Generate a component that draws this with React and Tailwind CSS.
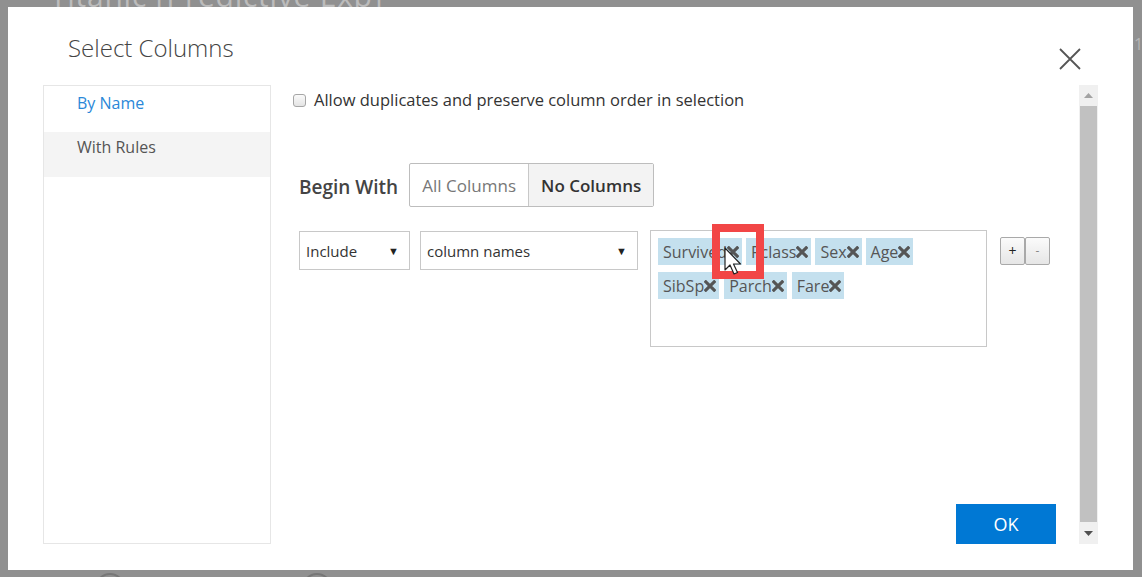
import React from 'react';

const font = { fontFamily: '"Open Sans", "Noto Sans", sans-serif' };

const tagsRow1 = ['Survived', 'Pclass', 'Sex', 'Age'];
const tagsRow2 = ['SibSp', 'Parch', 'Fare'];

const Tag = ({ label }) => (
  <span className="inline-flex items-center h-[27px] pl-[5px] pr-[3px] bg-[#c4e0ee] text-[16px] text-[#555] leading-none">
    {label}
    <svg width="12" height="12" viewBox="0 0 10 10">
      <path d="M1.5 1.5 L8.5 8.5 M8.5 1.5 L1.5 8.5" stroke="#555" strokeWidth="2.6" strokeLinecap="square" />
    </svg>
  </span>
);

const Select = ({ value, width }) => (
  <div className={`flex items-center justify-between h-[39px] ${width} border border-[#c8c8c8] bg-white pl-[6px] pr-[10px] pt-[2px] text-[15px] text-[#333]`}>
    <span>{value}</span>
    <span className="text-[11px] text-[#222]">▼</span>
  </div>
);

const App = () => {
  return (
    <div className="relative w-[1142px] h-[577px] overflow-hidden bg-[#909090]" style={font}>
      {/* page behind the overlay */}
      <div className="absolute left-[50px] -top-[27px] text-[30px] text-[#bcbcbc] tracking-wide">Titanic [Predictive Exp]</div>
      <div className="absolute left-[1134px] top-[32px] text-[16px] text-[#b5b5b5]">1</div>
      <div className="absolute left-[95px] top-[573px] w-[30px] h-[30px] rounded-full border-2 border-[#777]" />
      <div className="absolute left-[302px] top-[573px] w-[30px] h-[30px] rounded-full border-2 border-[#777]" />

      {/* dialog */}
      <div className="absolute left-[8px] top-[7px] w-[1125px] h-[563px] bg-white flex flex-col">
        <div className="flex items-start justify-between h-[78px]">
          <h1 className="ml-[60px] mt-[23px] text-[24px] font-light text-[#444]">Select Columns</h1>
          <button className="mr-[52px] mt-[41px] w-[22px] h-[22px]">
            <svg viewBox="0 0 22 22" width="22" height="22">
              <path d="M1 1 L21 21 M21 1 L1 21" stroke="#555" strokeWidth="1.8" />
            </svg>
          </button>
        </div>

        <div className="flex h-[459px]">
          {/* left nav */}
          <div className="ml-[35px] w-[228px] border border-[#e6e6e6]">
            <div className="h-[46px] pl-[33px] pt-[5px] text-[16px] text-[#2b88d8]">By Name</div>
            <div className="h-[45px] pl-[33px] pt-[3px] bg-[#f4f4f4] text-[16px] text-[#555]">With Rules</div>
          </div>

          {/* content */}
          <div className="relative flex-1 flex flex-col pl-[28px] pr-[23px]">
            <label className="flex items-center -ml-[6px] mt-[6px] h-[18px] gap-[8px] text-[16.5px] text-[#333]">
              <span className="w-[13px] h-[13px] rounded-[3px] border border-[#a6a6a6] bg-gradient-to-b from-[#fafafa] to-[#e4e4e4]" />
              Allow duplicates and preserve column order in selection
            </label>

            <div className="flex items-center mt-[54px] h-[44px]">
              <span className="text-[19px] font-semibold text-[#444] mr-[11px] pt-[4px]">Begin With</span>
              <div className="flex h-[44px] border border-[#bdbdbd] rounded-[2px]">
                <div className="w-[118px] flex items-center justify-center pt-[2px] text-[17px] text-[#777]">All Columns</div>
                <div className="w-[125px] flex items-center justify-center pt-[2px] text-[17px] font-semibold text-[#333] bg-[#f3f3f3] border-l border-[#c8c8c8]">No Columns</div>
              </div>
            </div>

            <div className="flex items-start mt-[23px]">
              <div className="mt-[1px]"><Select value="Include" width="w-[111px]" /></div>
              <div className="ml-[10px] mt-[1px]"><Select value="column names" width="w-[218px]" /></div>
              <div className="relative ml-[12px] w-[337px] h-[117px] border border-[#c8c8c8] pl-[7px] pt-[7px] flex flex-col gap-[7px]">
                <div className="flex gap-[4px]">
                  {tagsRow1.map((t) => <Tag key={t} label={t} />)}
                </div>
                <div className="flex gap-[5px]">
                  {tagsRow2.map((t) => <Tag key={t} label={t} />)}
                </div>
                {/* highlight box */}
                <div className="absolute left-[61px] -top-[7px] w-[52px] h-[55px] border-[8px] border-[#f24646]" />
                {/* mouse cursor */}
                <svg className="absolute left-[73px] top-[16px]" width="22" height="30" viewBox="0 0 22 30">
                  <path d="M1 1 L1 23 L6 18 L10 27 L13.5 25.5 L9.5 17 L16.5 17 Z" fill="#fff" stroke="#222" strokeWidth="1.2" strokeLinejoin="round" />
                </svg>
              </div>
              <div className="ml-[13px] mt-[7px] flex">
                <button className="w-[25px] h-[28px] border border-[#a9a9a9] rounded-[2px] bg-gradient-to-b from-[#fbfbfb] to-[#e6e6e6] text-[14px] text-[#222] leading-none">+</button>
                <button className="w-[25px] h-[28px] border border-[#a9a9a9] rounded-[2px] bg-gradient-to-b from-[#fbfbfb] to-[#e6e6e6] text-[12px] text-[#888] leading-none">-</button>
              </div>
            </div>

            <div className="mt-auto flex justify-end">
              <button className="w-[100px] h-[40px] bg-[#0078d4] text-white text-[18px]">OK</button>
            </div>
          </div>

          {/* scrollbar */}
          <div className="w-[19px] mr-[35px] bg-[#f0f0f0] flex flex-col items-center">
            <div className="h-[21px] flex items-center justify-center">
              <svg width="9" height="5" viewBox="0 0 9 5"><path d="M0 5 L4.5 0 L9 5 Z" fill="#a3a3a3" /></svg>
            </div>
            <div className="flex-1 w-[17px] bg-[#c1c1c1]" />
            <div className="h-[22px] flex items-center justify-center">
              <svg width="9" height="5" viewBox="0 0 9 5"><path d="M0 0 L4.5 5 L9 0 Z" fill="#505050" /></svg>
            </div>
          </div>
        </div>
      </div>
    </div>
  );
};

export default App;
